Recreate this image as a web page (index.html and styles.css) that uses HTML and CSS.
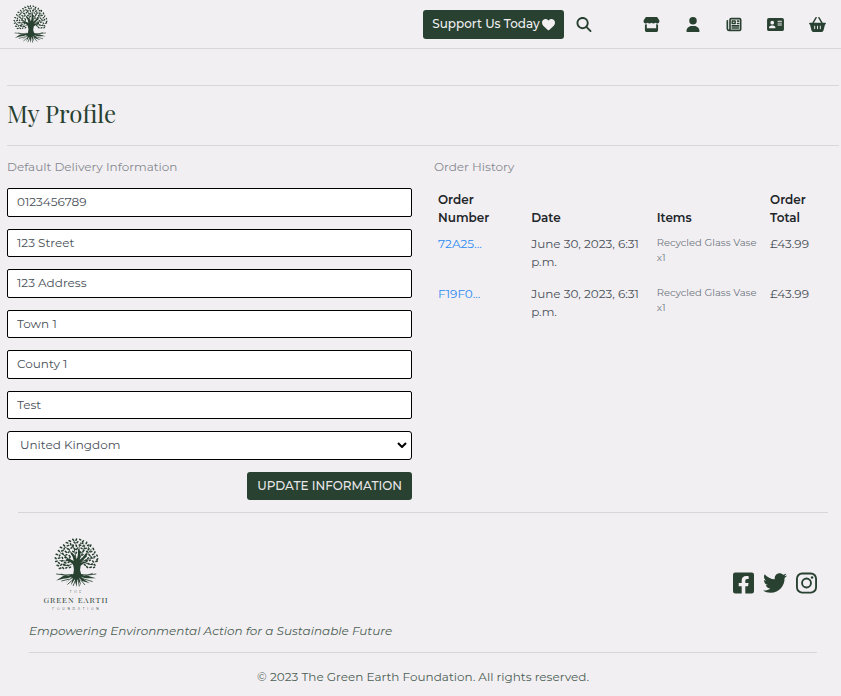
FILE: index.html
```html
<!DOCTYPE html>
<html lang="en">
<head>
<meta charset="utf-8">
<meta name="viewport" content="width=device-width, initial-scale=1">
<title>My Profile</title>
<link rel="stylesheet" href="styles.css">
</head>
<body>
<svg class="defs" aria-hidden="true">
  <symbol id="tree" viewBox="0 0 100 106">
    <path fill="currentColor" d="M43 78Q46 66 42 57Q37 50 27 49L28 45Q38 45 44 50Q44 42 37 33L40 31Q48 38 50 46Q54 40 53 25L56 24Q61 38 57 47Q64 43 70 33L73 35Q68 47 59 53Q64 52 73 49L74 52Q64 55 59 60Q56 68 60 78Q66 83 76 82L92 87L75 87Q66 88 60 84Q66 91 79 98L62 93L56 86L60 102L52 89L50 106L46 89L38 102L42 86L25 98Q36 90 40 84Q30 88 21 88L6 92L21 82Q34 82 43 78Z"/>
    <g fill="none" stroke="currentColor" stroke-width="1.8" stroke-linecap="round">
      <path d="M46 53Q34 48 22 37M36 47Q28 52 14 49M41 36Q36 25 25 19M49 45Q47 28 42 14M55 30Q54 20 59 10M57 44Q65 32 68 17M65 43Q75 36 82 24M59 52Q72 45 89 43M65 52Q76 59 87 58M43 55Q35 61 22 60M31 45Q24 34 15 32M71 35Q76 28 76 19"/>
      <path d="M40 79Q26 82 7 78M30 82L17 78M58 79Q73 82 92 78M68 82L84 77M34 89L18 93M64 88L84 94M40 92L31 100M59 91L68 101M47 93L43 103M54 93L56 104"/>
    </g>
    <path fill="none" stroke="currentColor" stroke-width="3.3" stroke-linecap="round" d="M42 3l2 2M50 2l-1 3M57 3l2 1M34 6l3 1M65 6l-2 2M28 10l3 1M37 12l1 3M45 9l2 2M53 8l-2 2M62 12l2-1M72 9l-1 3M22 15l2 2M30 17l3-1M43 16l-2 2M49 15l1 3M56 15l3 1M66 16l-2 2M74 16l3-1M81 15l-1 3M15 20l3 1M24 22l-1 2M31 23l3 2M38 22l2-1M46 23l1 2M52 22l-2 3M60 22l2 1M68 23l3-1M77 23l-1 2M86 22l1 3M11 27l2 2M18 28l3-1M26 29l2 2M34 30l-2 1M42 29l2 1M50 31l-1 2M58 30l2 2M64 29l2-2M72 29l2 1M80 30l3-1M90 30l-1 2M6 35l3 1M14 37l-1 2M20 33l1 2M27 37l2-1M34 38l2 2M62 37l2-1M69 41l2-2M77 36l2 2M85 36l2-1M94 37l1 2M4 43l2 2M11 44l3-1M19 42l1 2M25 42l2 1M35 43l1-1M74 44l2-1M81 41l2 1M88 41l2-1M96 45l-2 2M5 51l3-1M11 53l2 2M18 50l2-1M24 53l3 1M32 53l2-1M70 48l3 1M78 49l2-1M85 50l2 2M92 51l3-1M8 59l3 1M16 59l2-2M22 57l3 1M30 59l3 1M67 57l2 2M75 55l2 1M82 57l2-1M89 57l1 2M13 66l3-1M20 64l2 2M27 65l2-1M35 64l2-1M72 62l2 2M79 64l3-1M87 64l2-1"/>
  </symbol>
</svg>

<header class="topbar">
  <a class="brand" href="#" aria-label="The Green Earth Foundation"><svg><use href="#tree"/></svg></a>
  <nav class="nav" aria-label="Main">
    <div class="nav-actions">
      <a class="btn support" href="#">Support Us Today
        <svg class="heart" viewBox="0 0 512 512"><path d="M47.6 300.4L228.3 469.1c7.5 7 17.4 10.9 27.7 10.9s20.2-3.9 27.7-10.9L464.4 300.4c30.4-28.3 47.6-68 47.6-109.5v-5.8c0-69.9-50.5-129.5-119.4-141C347 36.5 300.6 51.4 268 84L256 96 244 84c-32.6-32.6-79-47.5-124.6-39.9C50.5 55.6 0 115.2 0 185.1v5.8c0 41.5 17.2 81.2 47.6 109.5z"/></svg></a>
      <button class="search" type="button" aria-label="Search"><svg class="icon" viewBox="0 0 512 512"><path d="M416 208c0 45.9-14.9 88.3-40 122.7L502.6 457.4c12.5 12.5 12.5 32.8 0 45.3s-32.8 12.5-45.3 0L330.7 376c-34.4 25.2-76.8 40-122.7 40C93.1 416 0 322.9 0 208S93.1 0 208 0S416 93.1 416 208zM208 352a144 144 0 1 0 0-288 144 144 0 1 0 0 288z"/></svg></button>
    </div>
    <ul class="nav-links">
      <li><a href="#" aria-label="Shop"><svg class="icon wide" viewBox="0 0 576 512"><path d="M547.600 103.800L490.300 13.100C485.200 5 476.100 0 466.400 0H109.600C99.900 0 90.800 5 85.700 13.100L28.300 103.800c-29.600 46.800-3.400 111.900 51.900 119.400c4 .5 8.100 .8 12.100 .8c26.100 0 49.300-11.400 65.200-29c15.900 17.600 39.100 29 65.200 29c26.100 0 49.300-11.400 65.200-29c15.900 17.600 39.100 29 65.200 29c26.200 0 49.300-11.400 65.200-29c16 17.600 39.100 29 65.200 29c4.100 0 8.100-.3 12.100-.8c55.500-7.400 81.800-72.500 52.100-119.400zM499.700 254.900c-5.300 .7-10.700 1.100-16.200 1.100c-12.400 0-24.300-1.900-35.400-5.300V384H128V250.600c-11.200 3.500-23.200 5.400-35.600 5.400c-5.500 0-11-.4-16.300-1.100c-4.100-.6-8.100-1.300-12.100-2.300V448c0 35.300 28.700 64 64 64H448c35.300 0 64-28.700 64-64V252.600c-4 1-8 1.800-12.300 2.300z"/></svg></a></li>
      <li><a href="#" aria-label="Profile"><svg class="icon" viewBox="0 0 448 512"><path d="M224 256A128 128 0 1 0 224 0a128 128 0 1 0 0 256zm-45.700 48C79.800 304 0 383.800 0 482.300C0 498.700 13.300 512 29.700 512H418.300c16.400 0 29.700-13.300 29.700-29.700C448 383.800 368.200 304 269.700 304H178.300z"/></svg></a></li>
      <li><a href="#" aria-label="News"><svg class="icon" viewBox="0 0 512 512"><path fill="none" stroke="currentColor" stroke-width="56" stroke-linecap="round" stroke-linejoin="round" d="M120 390V96Q120 56 160 56H444Q484 56 484 96V416Q484 456 444 456H80Q28 456 28 400V128M120 390Q120 456 80 456M192 304H416M192 376H416M376 140H416M376 222H416"/><path fill-rule="evenodd" d="M190 112H300Q320 112 320 132V226Q320 246 300 246H190Q170 246 170 226V132Q170 112 190 112ZM218 160V198H272V160Z"/></svg></a></li>
      <li><a href="#" aria-label="Contact"><svg class="icon wide" viewBox="0 0 576 512"><path fill-rule="evenodd" d="M64 32H512Q576 32 576 96V416Q576 480 512 480H64Q0 480 0 416V96Q0 32 64 32ZM176 128a64 64 0 1 0 0 128a64 64 0 1 0 0-128ZM144 288Q64 294 64 368Q64 384 80 384H272Q288 384 288 368Q288 294 208 288ZM368 128H496Q512 128 512 144Q512 160 496 160H368Q352 160 352 144Q352 128 368 128ZM368 192H496Q512 192 512 208Q512 224 496 224H368Q352 224 352 208Q352 192 368 192ZM368 256H496Q512 256 512 272Q512 288 496 288H368Q352 288 352 272Q352 256 368 256Z"/></svg></a></li>
      <li><a href="#" aria-label="Basket"><svg class="icon wide" viewBox="0 0 576 512"><path fill="none" stroke="currentColor" stroke-width="48" stroke-linecap="round" d="M240 24L132 208M336 24L444 208"/><path fill-rule="evenodd" d="M32 192H544Q576 192 576 224Q576 256 544 256L492 464Q480 512 430 512H146Q96 512 84 464L32 256Q0 256 0 224Q0 192 32 192ZM192 288Q176 288 176 304V400Q176 416 192 416T208 400V304Q208 288 192 288ZM288 288Q272 288 272 304V400Q272 416 288 416T304 400V304Q304 288 288 288ZM384 288Q368 288 368 304V400Q368 416 384 416T400 400V304Q400 288 384 288Z"/></svg></a></li>
    </ul>
  </nav>
</header>

<main class="page">
  <h1 class="title">My Profile</h1>
  <div class="columns">
    <section>
      <h2 class="subtitle">Default Delivery Information</h2>
      <form class="form">
        <input type="text" aria-label="Phone Number" value="0123456789">
        <input type="text" aria-label="Street Address 1" value="123 Street">
        <input type="text" aria-label="Street Address 2" value="123 Address">
        <input type="text" aria-label="Town or City" value="Town 1">
        <input type="text" aria-label="County" value="County 1">
        <input type="text" aria-label="Postal Code" value="Test">
        <div class="select">
          <select aria-label="Country"><option>United Kingdom</option></select>
          <svg viewBox="0 0 10 6" aria-hidden="true"><path d="M1 1l4 4 4-4"/></svg>
        </div>
        <button class="btn update" type="button">UPDATE INFORMATION</button>
      </form>
    </section>
    <section>
      <h2 class="subtitle">Order History</h2>
      <table class="orders">
        <colgroup><col class="c-number"><col class="c-date"><col class="c-items"><col></colgroup>
        <thead><tr><th>Order Number</th><th>Date</th><th>Items</th><th>Order Total</th></tr></thead>
        <tbody>
          <tr><td><a href="#">72A25...</a></td><td>June 30, 2023, 6:31 p.m.</td><td class="items">Recycled Glass Vase x1</td><td>£43.99</td></tr>
          <tr><td><a href="#">F19F0...</a></td><td>June 30, 2023, 6:31 p.m.</td><td class="items">Recycled Glass Vase x1</td><td>£43.99</td></tr>
        </tbody>
      </table>
    </section>
  </div>
</main>

<footer class="footer">
  <div class="footer-top">
    <div>
      <div class="logo">
        <svg class="logo-tree"><use href="#tree"/></svg>
        <svg class="logo-words" viewBox="0 0 76 24" text-anchor="middle"><text class="tiny" x="38" y="6">T H E</text><text class="name" x="38" y="16">GREEN EARTH</text><text class="tiny" x="38" y="23">F O U N D A T I O N</text></svg>
      </div>
      <p class="tagline">Empowering Environmental Action for a Sustainable Future</p>
    </div>
    <div class="social">
      <a href="#" aria-label="Facebook"><svg viewBox="0 0 448 512"><path d="M400 32H48A48 48 0 0 0 0 80v352a48 48 0 0 0 48 48h137.250V327.690h-63V256h63v-54.640c0-62.150 37-96.480 93.670-96.480 27.140 0 55.520 4.840 55.520 4.840v61h-31.270c-30.810 0-40.420 19.120-40.420 38.730V256h68.780l-11 71.690h-57.780V480H400a48 48 0 0 0 48-48V80a48 48 0 0 0-48-48z"/></svg></a>
      <a href="#" aria-label="Twitter"><svg viewBox="0 0 512 512"><path d="M459.370 151.716c.325 4.548.325 9.097.325 13.645 0 138.720-105.583 298.558-298.558 298.558-59.452 0-114.680-17.219-161.137-47.106 8.447.974 16.568 1.299 25.340 1.299 49.055 0 94.213-16.568 130.274-44.832-46.132-.975-84.792-31.188-98.112-72.772 6.498.974 12.995 1.624 19.818 1.624 9.421 0 18.843-1.300 27.614-3.573-48.081-9.747-84.143-51.980-84.143-102.985v-1.299c13.969 7.797 30.214 12.670 47.431 13.319-28.264-18.843-46.781-51.005-46.781-87.391 0-19.492 5.197-37.360 14.294-52.954 51.655 63.675 129.300 105.258 216.365 109.807-1.624-7.797-2.599-15.918-2.599-24.040 0-57.828 46.782-104.934 104.934-104.934 30.213 0 57.502 12.670 76.670 33.137 23.715-4.548 46.456-13.320 66.599-25.340-7.798 24.366-24.366 44.833-46.132 57.827 21.117-2.273 41.584-8.122 60.426-16.243-14.292 20.791-32.161 39.308-52.628 54.253z"/></svg></a>
      <a href="#" aria-label="Instagram"><svg viewBox="0 0 448 512"><rect x="20" y="52" width="408" height="408" rx="112" fill="none" stroke="currentColor" stroke-width="40"/><circle cx="224" cy="256" r="95" fill="none" stroke="currentColor" stroke-width="40"/><circle cx="343" cy="137" r="27"/></svg></a>
    </div>
  </div>
  <p class="copyright">© 2023 The Green Earth Foundation. All rights reserved.</p>
</footer>
</body>
</html>
```
FILE: styles.css
```css
:root {
  --green: #284130;
  --paper: #f2eff3;
  --line: #d9d6da;
}
* { box-sizing: border-box; }
body {
  margin: 0;
  background: var(--paper);
  color: #212529;
  font: 12px/18px Montserrat, Inter, sans-serif;
}
h1, h2, p, ul { margin: 0; padding: 0; font-weight: 400; }
a { text-decoration: none; }
svg { display: block; fill: currentColor; }
.defs { position: absolute; width: 0; height: 0; }

.topbar {
  display: flex;
  justify-content: space-between;
  align-items: center;
  height: 49px;
  padding: 0 15px 0 12px;
  border-bottom: 1px solid var(--line);
  color: var(--green);
}
.topbar a, .search { color: inherit; }
.brand svg { width: 37px; height: 38px; }
.nav, .nav-actions, .nav-links { display: flex; align-items: center; }
.nav { gap: 51px; }
.nav-actions { gap: 12px; }
.nav-links { gap: 25px; list-style: none; }
.nav-links a { display: block; }
.icon { width: 16px; height: 15px; }
.icon.wide { width: 17px; }
.btn {
  border: 0;
  border-radius: 3px;
  background: var(--green);
  color: #e8e6e8;
  font: 500 12px/18px Montserrat, Inter, sans-serif;
}
.topbar .support {
  display: flex;
  align-items: center;
  justify-content: center;
  gap: 2px;
  min-width: 141px;
  height: 29px;
  padding: 0 9px;
  color: #f2eff3;
}
.heart { width: 13px; height: 13px; }
.search { padding: 0; border: 0; background: none; }

.page { padding: 36px 2px 0 7px; }
.title {
  padding: 11px 0 16px;
  border: solid var(--line);
  border-width: 1px 0;
  color: var(--green);
  font: 24px/32px "Playfair Display", "Liberation Serif", serif;
}
.columns {
  display: grid;
  grid-template-columns: 1fr 1fr;
  gap: 22px;
  padding-top: 12px;
}
.subtitle { color: #868a8f; font-size: 12px; line-height: 18px; }
.form {
  display: grid;
  grid-auto-rows: 1fr;
  gap: 12px;
  min-height: 312px;
  margin-top: 12px;
}
.form input, .form select {
  width: 100%;
  min-width: 0;
  padding: 0 9px;
  border: 1px solid #000;
  border-radius: 2px;
  background: #fff;
  color: #495057;
  font: 12px/18px Montserrat, Inter, sans-serif;
}
.select { display: grid; align-items: center; }
.select > * { grid-area: 1 / 1; }
.form select { height: 100%; padding: 0 12px; border-radius: 3px; appearance: none; }
.select svg {
  justify-self: end;
  width: 10px;
  height: 6px;
  margin-right: 5px;
  fill: none;
  stroke: #000;
  stroke-width: 2;
  pointer-events: none;
}
.update { justify-self: end; min-width: 164px; padding: 0 10px; }

.orders {
  width: 100%;
  margin-top: 12px;
  border-collapse: collapse;
  table-layout: fixed;
}
.c-number { width: 23%; }
.c-date { width: 31%; }
.c-items { width: 28%; }
.orders th, .orders td { padding: 4px; text-align: left; vertical-align: top; }
.orders th { padding-top: 3px; font-weight: 600; vertical-align: bottom; }
.orders td { padding-bottom: 10px; color: #495057; }
.orders .items { color: #6c757d; font-size: 10px; line-height: 15px; }
.orders a { color: #2a8bf2; }

.footer {
  margin: 12px 13px 0 18px;
  padding: 0 11px;
  border-top: 1px solid var(--line);
  color: var(--green);
}
.footer-top {
  display: flex;
  justify-content: space-between;
  align-items: center;
  padding: 25px 0 12px;
  border-bottom: 1px solid var(--line);
}
.logo { display: flex; flex-direction: column; align-items: center; width: 94px; }
.logo-tree { width: 47px; height: 49px; }
.logo-words { width: 76px; height: 24px; }
.name { font: 8px "Playfair Display", "Liberation Serif", serif; letter-spacing: 1px; }
.tiny { font: 3px/3px Montserrat, Inter, sans-serif; letter-spacing: 1px; }
.tagline { margin-top: 11px; color: #4c6153; font-style: italic; }
.social { display: flex; gap: 9px; padding-bottom: 12px; }
.social a { color: inherit; }
.social svg { height: 24px; }
.copyright { padding: 15px 0 10px; color: #4c6153; text-align: center; }
```
